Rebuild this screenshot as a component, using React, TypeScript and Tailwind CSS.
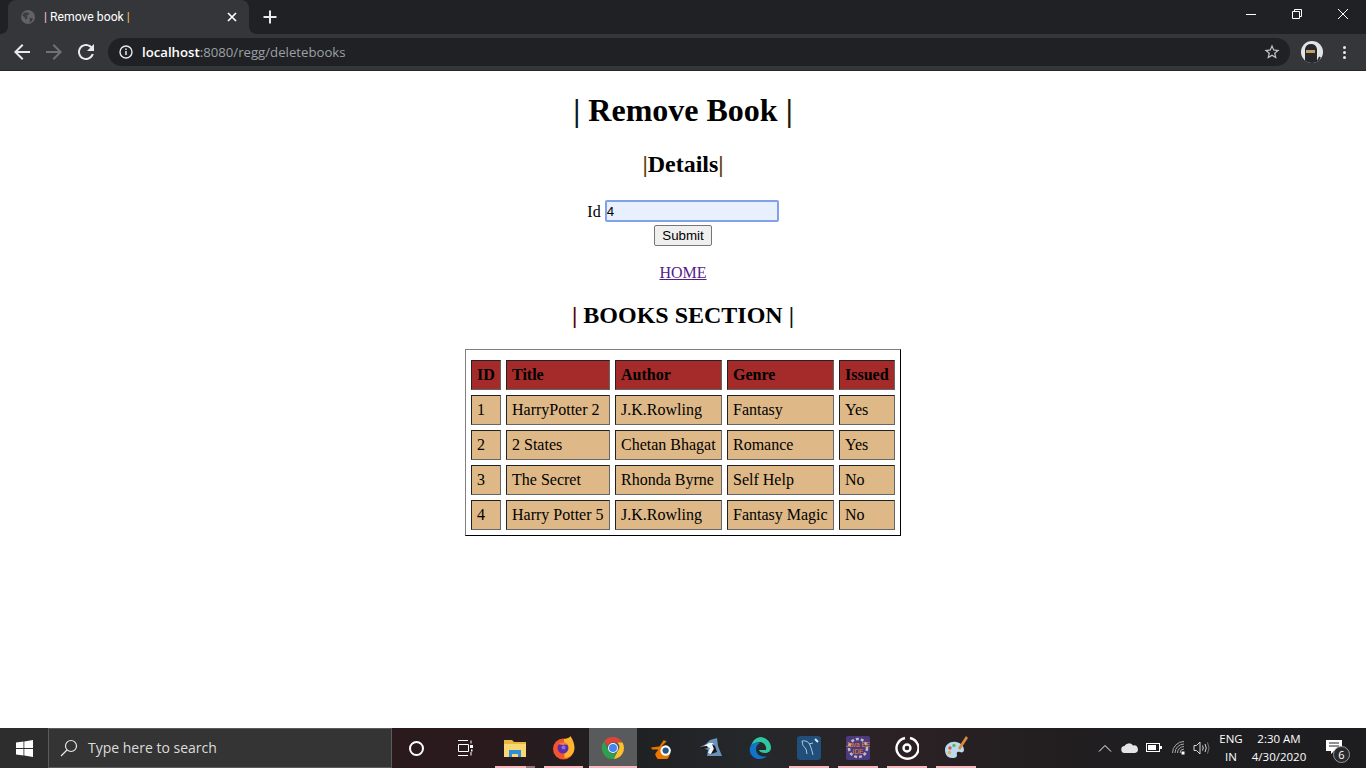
import type { ReactNode } from 'react';

const rows = [
  ['1', 'HarryPotter 2', 'J.K.Rowling', 'Fantasy', 'Yes'],
  ['2', '2 States', 'Chetan Bhagat', 'Romance', 'Yes'],
  ['3', 'The Secret', 'Rhonda Byrne', 'Self Help', 'No'],
  ['4', 'Harry Potter 5', 'J.K.Rowling', 'Fantasy Magic', 'No'],
];

const headers = [
  { label: 'ID', width: 'w-[30px]' },
  { label: 'Title', width: 'w-[104px]' },
  { label: 'Author', width: 'w-[107px]' },
  { label: 'Genre', width: 'w-[107px]' },
  { label: 'Issued', width: 'w-[56px]' },
];

const cellBorder = 'border border-t-[#222] border-l-[#222] border-b-[#666] border-r-[#666]';

const Slot = ({ children, pink, active, dim }: { children: ReactNode; pink?: string; active?: boolean; dim?: boolean }) => (
  <div className={`relative flex h-full w-[49px] items-center justify-center ${active ? 'border-l border-transparent bg-[#585a5c] bg-clip-padding' : ''}`}>
    {children}
    {pink && <div className={`absolute bottom-0 h-[2px] bg-[#f9b7bd] ${pink}`} />}
    {dim && <div className="absolute bottom-0 left-[36px] h-[2px] w-[9px] bg-[#9a7478]" />}
  </div>
);

const ChromeLogo = ({ size }: { size: number }) => (
  <svg width={size} height={size} viewBox="0 0 24 24">
    <path d="M12 1a11 11 0 0 1 9.5 5.5H12a5.5 5.5 0 0 0-5.2 3.6L3.2 5.2A11 11 0 0 1 12 1z" fill="#db4437" />
    <path d="M21.5 6.5A11 11 0 0 1 12.6 23l4.2-8.2a5.5 5.5 0 0 0-.6-8.3z" fill="#fbc02d" />
    <path d="M12.6 23A11 11 0 0 1 3.2 5.2l4.6 9.4A5.5 5.5 0 0 0 12 17.5a5 5 0 0 0 4.8-2.7z" fill="#2e9e4f" />
    <circle cx="12" cy="12" r="5" fill="#fff" />
    <circle cx="12" cy="12" r="4" fill="#4285f4" />
  </svg>
);

export default function App() {
  return (
    <div className="flex h-screen w-screen flex-col overflow-hidden bg-white font-['Liberation_Serif',serif] text-black">
      {/* tab strip */}
      <div className="flex h-[34px] shrink-0 bg-[#202124] font-['Open_Sans',sans-serif]">
        <div className="relative ml-2 flex h-full w-[241px] items-center rounded-t-lg bg-[#35363a] pl-[13px] pr-[9px]">
          <div className="absolute bottom-0 -left-2 size-2 bg-[radial-gradient(circle_at_0_0,transparent_8px,#35363a_8px)]" />
          <div className="absolute bottom-0 -right-2 size-2 bg-[radial-gradient(circle_at_100%_0,transparent_8px,#35363a_8px)]" />
          <svg width="14" height="14" viewBox="0 0 16 16">
            <circle cx="8" cy="8" r="8" fill="#5f6368" />
            <path d="M3 3.5 7 2.5 9.5 4 8 6 6.5 6 7.5 9 5 11 4 8 1.5 6.500zM10 9h3.500l-1 3.500L10 14.500z" fill="#3b3d41" />
          </svg>
          <span className="ml-[9px] flex-1 font-['Roboto',sans-serif] text-[12.2px] leading-4 text-white">
            <span className="text-[#f4c2e8]">|</span> Remove book <span className="text-[#f5c469]">|</span>
          </span>
          <svg width="16" height="16" viewBox="0 0 16 16" stroke="#fff" strokeWidth="1.7">
            <path d="M4 4l8 8M12 4l-8 8" />
          </svg>
        </div>
        <div className="ml-[11px] flex items-center">
          <svg width="20" height="20" viewBox="0 0 20 20" stroke="#e8eaed" strokeWidth="2">
            <path d="M10 3.5v13M3.5 10h13" />
          </svg>
        </div>
        <div className="flex-1" />
        <div className="flex h-[28px]">
          <div className="flex w-[46px] items-center justify-center">
            <div className="h-px w-[10px] bg-white" />
          </div>
          <div className="flex w-[46px] items-center justify-center">
            <svg width="10" height="10" viewBox="0 0 10 10" fill="none" stroke="#fff">
              <path d="M.5 2.5h7v7h-7zM2.5 2.5v-2h7v7h-2" />
            </svg>
          </div>
          <div className="flex w-[46px] items-center justify-center">
            <svg width="10" height="10" viewBox="0 0 10 10" stroke="#fff" strokeWidth="1">
              <path d="M0 0l10 10M10 0L0 10" />
            </svg>
          </div>
        </div>
      </div>

      {/* toolbar */}
      <div className="flex h-[37px] shrink-0 items-center border-b border-[#26272a] bg-[#35363a] font-['Open_Sans',sans-serif]">
        <div className="flex w-[108px] items-center pl-[10px]">
          <svg className="mr-[8px]" width="24" height="24" viewBox="0 0 24 24" fill="#e8eaed">
            <path d="M20 11H7.83l5.59-5.59L12 4l-8 8 8 8 1.41-1.41L7.83 13H20v-2z" />
          </svg>
          <svg className="mr-[8px]" width="24" height="24" viewBox="0 0 24 24" fill="#6f7175">
            <path d="M12 4l-1.41 1.41L16.17 11H4v2h12.17l-5.58 5.59L12 20l8-8z" />
          </svg>
          <svg width="24" height="24" viewBox="0 0 24 24" fill="#e8eaed">
            <path d="M17.65 6.35C16.2 4.9 14.21 4 12 4c-4.42 0-7.99 3.58-7.99 8s3.57 8 7.99 8c3.73 0 6.84-2.55 7.73-6h-2.08c-.82 2.33-3.04 4-5.65 4-3.31 0-6-2.69-6-6s2.69-6 6-6c1.66 0 3.14.69 4.22 1.78L13 11h7V4l-2.35 2.35z" />
          </svg>
        </div>
        <div className="flex h-[28px] w-[1182px] items-center rounded-full bg-[#202124] pl-[10px] pr-[9px]">
          <svg width="16" height="16" viewBox="0 0 16 16" fill="none">
            <circle cx="8" cy="8" r="6" stroke="#e8eaed" strokeWidth="1.4" />
            <path d="M8 7v4M8 4.6v1.3" stroke="#e8eaed" strokeWidth="1.5" />
          </svg>
          <span className="ml-[8px] flex-1 text-[13.2px] leading-5 text-[#9aa0a6]">
            <span className="font-semibold text-white">localhost</span>:8080/regg/deletebooks
          </span>
          <svg width="18" height="18" viewBox="0 0 24 24" fill="#c4c7c9">
            <path d="M22 9.24l-7.19-.62L12 2 9.19 8.63 2 9.24l5.46 4.73L5.82 21 12 17.27 18.18 21l-1.63-7.03L22 9.24zM12 15.4l-3.76 2.27 1-4.28-3.32-2.88 4.38-.38L12 6.1l1.71 4.04 4.38.38-3.32 2.88 1 4.28L12 15.4z" />
          </svg>
        </div>
        <div className="ml-[11px] size-[22px] overflow-hidden rounded-full">
          <svg width="22" height="22" viewBox="0 0 22 22">
            <rect width="22" height="22" fill="#e4e4e4" />
            <path d="M4 22V8q1-5 6-5t6 5v14z" fill="#26282b" />
            <rect x="5" y="9" width="9" height="3" fill="#c99a6b" />
            <path d="M16 22l3-6" stroke="#26282b" strokeWidth="2" />
          </svg>
        </div>
        <div className="ml-[20px] flex flex-col gap-[2px]">
          <div className="size-[3px] rounded-full bg-[#e8eaed]" />
          <div className="size-[3px] rounded-full bg-[#e8eaed]" />
          <div className="size-[3px] rounded-full bg-[#e8eaed]" />
        </div>
      </div>

      {/* page */}
      <main className="flex-1 overflow-hidden text-center text-base">
        <h1 className="mt-[21px] mb-[22px] text-[32px] leading-[37px] font-bold">
          <span className="text-[#0a1622]">|</span> Remove Book <span className="text-[#221408]">|</span>
        </h1>
        <h2 className="my-5 text-2xl leading-[27px] font-bold">
          <span className="text-[#5a3e00]">|</span>Details<span className="text-[#5a3e00]">|</span>
        </h2>
        <form className="pt-[3px] leading-[18px]">
          <label>
            Id{' '}
            <input
              readOnly
              value="4"
              className="h-[22px] w-[174px] -translate-y-px rounded-[2px] border-2 border-[#7fa2e8] bg-[#e8f0fe] font-['Liberation_Sans',sans-serif] text-[13.33px] outline-none"
            />
          </label>
          <br />
          <button
            type="button"
            className="mt-[2px] h-[21px] w-[58px] rounded-[2px] border border-[#767676] bg-[#efefef] font-['Liberation_Sans',sans-serif] text-[13.33px] leading-none"
          >
            Submit
          </button>
        </form>
        <p className="mt-[18px] mb-4 leading-[18px]">
          <a href="#home" className="text-[#551a8b] underline">
            HOME
          </a>
        </p>
        <h2 className="my-5 text-2xl leading-[27px] font-bold">
          <span className="text-[#5a0000]">|</span> BOOKS SECTION <span className="text-[#0a1622]">|</span>
        </h2>
        <table className="mx-auto border-separate border-spacing-[5px] border border-t-[#808080] border-l-[#808080] border-r-black border-b-black text-left">
          <tbody>
            <tr />
            <tr>
              {headers.map((h) => (
                <th key={h.label} className={`${cellBorder} ${h.width} bg-[#a52a2a] p-[5px] leading-[18px] font-bold`}>
                  {h.label}
                </th>
              ))}
            </tr>
            {rows.map((row) => (
              <tr key={row[0]}>
                {row.map((cell, idx) => (
                  <td key={idx} className={`${cellBorder} bg-[#deb887] p-[5px] leading-[18px]`}>
                    {cell}
                  </td>
                ))}
              </tr>
            ))}
          </tbody>
        </table>
      </main>

      {/* taskbar */}
      <footer className="flex h-[40px] shrink-0 bg-[linear-gradient(90deg,#2a1a1d_0%,#2a1a1d_36%,#1f2022_46%,#25282b_55%,#2b2124_66%,#241f21_74%,#1e1e20_85%,#1d1d1f_100%)] font-['Open_Sans',sans-serif] text-white">
        <div className="flex h-full w-[48px] items-center justify-center bg-[#2d2d2d]">
          <svg width="17" height="17" viewBox="0 0 17 17" fill="#fff">
            <path d="M0 2.6 7.5 1.5v6.6H0zM8.3 1.4 17 0v8.1H8.3zM0 8.9h7.5v6.6L0 14.4zM8.3 8.9H17V17L8.3 15.6z" />
          </svg>
        </div>
        <div className="flex h-full w-[344px] items-center border border-[#5b5b5b] bg-[#343434] pl-[11px]">
          <svg width="18" height="18" viewBox="0 0 18 18" fill="none" stroke="#e6e6e6" strokeWidth="1.2">
            <circle cx="11" cy="7" r="5.5" />
            <path d="M7 11l-6 6" />
          </svg>
          <span className="ml-[10px] text-[14px] leading-5 text-[#dcdcdc]">Type here to search</span>
        </div>

        <Slot>
          <div className="size-[15px] rounded-full border-[2px] border-white" />
        </Slot>
        <Slot>
          <svg width="18" height="16" viewBox="0 0 18 16" fill="none" stroke="#fff" strokeWidth="1">
            <path d="M1 .5h10M1 15.5h10M1.5 4.5h10v7h-10zM14 .5v3M14 12v3.5" />
            <rect x="13" y="5" width="3" height="3" fill="#fff" stroke="none" />
            <rect x="14" y="9.5" width="1.5" height="2" fill="#fff" stroke="none" />
          </svg>
        </Slot>
        <Slot pink="left-[5px] w-[31px]" dim>
          <svg width="22" height="20" viewBox="0 0 22 20">
            <path d="M0 2h8l2 2h12v15H0z" fill="#e8b93c" />
            <path d="M0 6h22v13H0z" fill="#f8d775" />
            <path d="M5 19v-7h12v7h-3v-3H8v3z" fill="#2f8ed8" />
          </svg>
        </Slot>
        <Slot pink="left-[5px] w-[39px]">
          <svg width="24" height="24" viewBox="0 0 24 24">
            <circle cx="11.5" cy="13" r="10.5" fill="#f4532f" />
            <path d="M12 3c5-1 6-2 6.5-3 1 2 4 6 4 12 0 6-5 10-10 10z" fill="#ffb52c" />
            <circle cx="11" cy="12" r="5.5" fill="#5c2ea8" />
            <path d="M6 8q6-4 10 1-3-1-5 0z" fill="#ff7a2f" />
            <circle cx="11.5" cy="11.5" r="2" fill="#8f6bec" />
          </svg>
        </Slot>
        <Slot active pink="left-0 w-[48px]">
          <ChromeLogo size={24} />
        </Slot>
        <Slot>
          <svg width="24" height="21" viewBox="0 0 23 20">
            <path d="M1 9l8-1 4-6 3 1-5 5 3 0a7 7 0 1 1-9 7L8 11 2 11z" fill="#ea7600" />
            <circle cx="15" cy="12" r="5" fill="#fff" />
            <circle cx="15" cy="12" r="3" fill="#265787" />
          </svg>
        </Slot>
        <Slot>
          <svg width="22" height="20" viewBox="0 0 22 20">
            <path d="M0 9l6-3 4-4 7-2 1 8 4 10H7l1-6z" fill="#6a92b8" />
            <path d="M4 8l5-3 4 0 1 5-3 6-3-1 2-5z" fill="#f1f3f5" />
            <path d="M0 9l7-1 1 2-5 1zM12 6l2 5-3 5 6-2-2-6z" fill="#15181c" />
          </svg>
        </Slot>
        <Slot>
          <svg width="24" height="24" viewBox="0 0 24 24">
            <path d="M12 1a11 11 0 0 1 11 11c0 3-3 5-6 5-4 0-6-2-6-3h7c1-5-3-8-6-8-4 0-8 3-9 6A11 11 0 0 1 12 1z" fill="#2fc6a0" />
            <path d="M3 9c-4 7 2 14 8 14 3 0 6-1 8-3-5 2-11-1-11-7 0-3 2-5 4-6C8 6 5 7 3 9z" fill="#1173c9" />
          </svg>
        </Slot>
        <Slot pink="left-[5px] w-[40px]">
          <svg width="24" height="24" viewBox="0 0 24 24" fill="none">
            <rect width="24" height="24" rx="3" fill="#1f4f7a" />
            <path d="M5 5q6-1 8 4t3 10M5 5q0 5 4 8l1 5M12 8l4-1" stroke="#a9c7dc" strokeWidth="1" />
            <path d="M18 3l3 3" stroke="#dfe8ee" strokeWidth="2" />
          </svg>
        </Slot>
        <Slot pink="left-[5px] w-[40px]">
          <svg width="24" height="24" viewBox="0 0 24 24">
            <rect width="24" height="24" rx="2" fill="#4b3a80" />
            <circle cx="12" cy="12" r="9" fill="none" stroke="#bdbdbd" strokeWidth="2.5" strokeDasharray="3 2" />
            <text x="12" y="11" textAnchor="middle" fontSize="6.5" fontFamily="Liberation Sans" fill="#f08a24">
              Java EE
            </text>
            <text x="12" y="18" textAnchor="middle" fontSize="6.5" fontFamily="Liberation Sans" fill="#f08a24">
              IDE
            </text>
          </svg>
        </Slot>
        <Slot pink="left-[5px] w-[40px]">
          <svg width="24" height="24" viewBox="0 0 24 24" fill="none" stroke="#fff">
            <path d="M15 2a11 10.500 0 1 1-5 0" strokeWidth="2.4" />
            <circle cx="12" cy="12" r="3.500" strokeWidth="2.4" />
          </svg>
        </Slot>
        <Slot pink="left-[5px] w-[40px]">
          <svg width="24" height="24" viewBox="0 0 24 24">
            <path d="M1 14c0-6 6-9 11-8 6 1 8 5 8 8 0 2-2 3-4 2-2-1-4 0-3 3 0 3-3 3-5 3-4 0-7-3-7-8z" fill="#b9d9ee" />
            <circle cx="6" cy="12" r="1.700" fill="#e04f4f" />
            <circle cx="10" cy="9.500" r="1.700" fill="#57b85a" />
            <circle cx="5.500" cy="16.500" r="1.700" fill="#e8b13c" />
            <path d="M22 0l-8 12 2 2 8-12z" fill="#d9893a" />
          </svg>
        </Slot>

        <div className="flex-1" />
        {/* tray */}
        <div className="flex h-full items-center">
          <svg width="14" height="8" viewBox="0 0 14 8" fill="none" stroke="#fff" strokeWidth="1">
            <path d="M1 7.500l6-6 6 6" />
          </svg>
          <svg className="ml-[9px]" width="18" height="10" viewBox="0 0 18 10" fill="#e4e4e4">
            <path d="M4 10a3.500 3.500 0 0 1-.5-7A5 5 0 0 1 12 2.500a3.800 3.800 0 0 1 2 7.500z" />
          </svg>
          <svg className="ml-[7px]" width="16" height="10" viewBox="0 0 16 10" fill="none" stroke="#fff">
            <rect x=".5" y=".5" width="13" height="8" />
            <rect x="2" y="2" width="8" height="5" fill="#fff" stroke="none" />
            <rect x="14" y="3" width="2" height="3" fill="#fff" stroke="none" />
          </svg>
          <svg className="ml-[10px]" width="14" height="14" viewBox="0 0 14 14" fill="none" stroke="#a8a8a8">
            <path d="M.5 12A11.500 11.500 0 0 1 12 .5M3 12a9 9 0 0 1 9-9M5.500 12A6.500 6.500 0 0 1 12 5.500M8 12a4 4 0 0 1 4-4" />
            <rect x="9.500" y="10.500" width="3" height="3" fill="#fff" stroke="none" />
          </svg>
          <svg className="ml-[7px]" width="17" height="14" viewBox="0 0 17 14" fill="none" stroke="#d8d8d8">
            <path d="M1 4.500h2.500L7 1v12L3.500 9.500H1z" />
            <path d="M9.500 4.500q1.500 2.500 0 5M12 3q2.500 4 0 8" />
            <path d="M14.500 1.500q3 5.500 0 11" stroke="#777" />
          </svg>
          <div className="ml-[3px] flex w-[36px] flex-col items-center text-[11.5px] leading-[18px]">
            <span>ENG</span>
            <span>IN</span>
          </div>
          <div className="flex w-[60px] flex-col items-center text-[11.5px] leading-[18px]">
            <span>2:30 AM</span>
            <span>4/30/2020</span>
          </div>
          <div className="relative flex h-full w-[57px] items-center justify-center">
            <svg className="-mt-[3px] -ml-[8px]" width="16" height="14" viewBox="0 0 16 14" fill="#fff">
              <path d="M0 0h16v11H8l-3 3v-3H0z" />
              <path d="M3 3h10M3 6h10" stroke="#222" />
            </svg>
            <div className="absolute top-[18px] left-[24px] flex size-[17px] items-center justify-center rounded-full border border-[#999] bg-[#2a2a2c] text-[11px] leading-none">
              6
            </div>
          </div>
        </div>
      </footer>
    </div>
  );
}
